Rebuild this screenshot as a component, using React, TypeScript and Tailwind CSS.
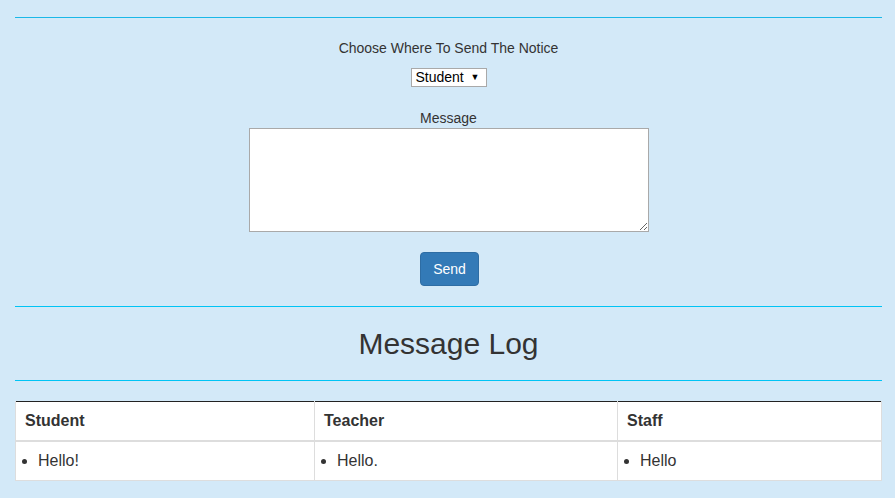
import { useState } from "react";

const logs = [
  { title: "Student", width: "w-[299px]", items: ["Hello!"] },
  { title: "Teacher", width: "w-[303px]", items: ["Hello."] },
  { title: "Staff", width: "", items: ["Hello"] },
];

export default function App() {
  const [message, setMessage] = useState("");

  return (
    <div className="min-h-screen bg-[#d3e9f8] pt-[17px] font-['Liberation_Sans',Arial,sans-serif] text-[#333]">
      <div className="ml-[15px] w-[867px]">
        <div className="h-px bg-[#1ab8e8]" />

        <div className="mt-[20px] flex flex-col items-center">
          <p className="text-[14px] leading-[20px]">Choose Where To Send The Notice</p>
          <div className="mt-[10px] flex h-[19px] w-[76px] items-center justify-between border border-[#a9a9a9] bg-white pl-[4px] pr-[6px] text-[14px] text-black">
            <span>Student</span>
            <span className="text-[9px]">▼</span>
          </div>

          <label className="mt-[21px] text-[14px] leading-[20px]">Message</label>
          <textarea
            value={message}
            onChange={(e) => setMessage(e.target.value)}
            className="block h-[104px] w-[400px] border border-[#a9a9a9] bg-white"
          />

          <button className="mt-[20px] ml-[2px] h-[34px] w-[59px] rounded-[4px] border border-[#2e6da4] bg-[#337ab7] text-[14px] text-white">
            Send
          </button>
        </div>

        <div className="mt-[20px] h-px bg-[#00c4f5]" />

        <h2 className="mt-[20px] text-center text-[30px] leading-[33px]">Message Log</h2>

        <div className="mt-[20px] h-px bg-[#00c4f5]" />

        <table className="mt-[20px] w-full table-fixed border-collapse bg-white">
          <thead>
            <tr className="border-t border-t-[#222]">
              {logs.map((l) => (
                <th
                  key={l.title}
                  className={`${l.width} border-x border-b-2 border-x-[#ddd] border-b-[#ddd] py-[8px] pr-[8px] pl-[9px] text-left text-[16px] leading-[22px] font-bold`}
                >
                  {l.title}
                </th>
              ))}
            </tr>
          </thead>
          <tbody>
            <tr>
              {logs.map((l) => (
                <td
                  key={l.title}
                  className="border border-[#ddd] px-[8px] py-[8px] text-[16px] leading-[22px] align-top"
                >
                  <ul className="list-outside list-disc pl-[14px]">
                    {l.items.map((m) => (
                      <li key={m}>{m}</li>
                    ))}
                  </ul>
                </td>
              ))}
            </tr>
          </tbody>
        </table>
      </div>
    </div>
  );
}
